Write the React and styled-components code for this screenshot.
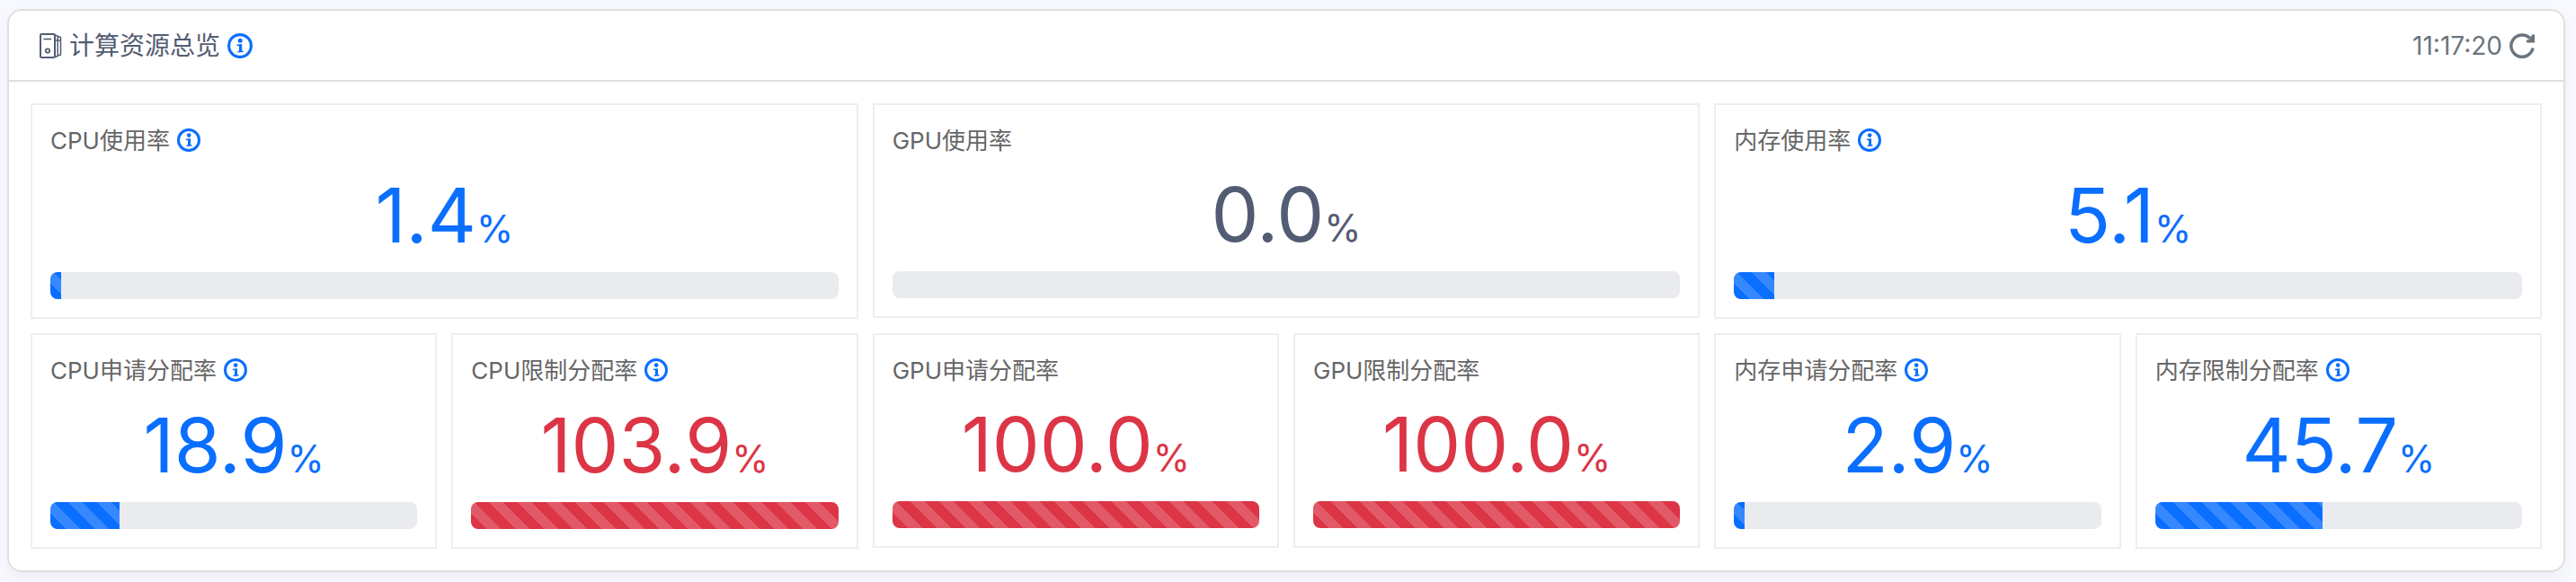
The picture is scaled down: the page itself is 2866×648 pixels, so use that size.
import React, { Component } from 'react';

import styled, { createGlobalStyle } from "styled-components";

const GlobalStyle = createGlobalStyle`
    * {
        box-sizing: border-box;
    }

    body {
        background: #f8f9fe;
        color: #525c72;
        font-family: Inter, "Noto Sans CJK SC", sans-serif;
        margin: 0;
    }
`;

const Page = styled.main`
    padding: 10px 12px 11px 8px;
`;

const Panel = styled.section`
    background: #fff;
    border: 2px solid #dfdfdf;
    border-radius: 16px;
    box-shadow: 0 8px 16px rgba(40, 70, 80, 0.05);
`;

const Header = styled.header`
    align-items: center;
    border-bottom: 2px solid #dfdfdf;
    display: flex;
    height: 79px;
    justify-content: space-between;
    padding: 0 32px 0 34px;
`;

const Title = styled.h1`
    align-items: center;
    display: flex;
    font-size: 28px;
    font-weight: 400;
    gap: 8px;
    line-height: 42px;
    margin: 0;
`;

const Clock = styled.div`
    align-items: center;
    color: #6c757d;
    display: flex;
    font-size: 28px;
    gap: 8px;
    line-height: 42px;
`;

const RefreshButton = styled.button`
    background: none;
    border: 0;
    color: inherit;
    cursor: pointer;
    display: flex;
    padding: 0;
`;

const Grid = styled.div`
    align-items: start;
    display: grid;
    gap: 16px;
    grid-template-columns: repeat(6, minmax(0, 1fr));
    padding: 24px;
`;

const Card = styled.article`
    border: 2px solid #eee;
    grid-column: span ${ props => props.$span };
    padding: 20px;
`;

const Label = styled.h2`
    color: #666;
    display: flex;
    font-size: 26px;
    font-weight: 400;
    gap: 8px;
    line-height: 39px;
    margin: 0;
`;

const Hint = styled.span`
    color: #0a6eff;
    display: flex;
    padding: 6px 0 8px;
`;

const TitleHint = styled.span`
    color: #0a6eff;
    display: flex;
`;

const Value = styled.div`
    color: ${ props => props.$color };
    font-size: 84px;
    line-height: 126px;
    text-align: center;
`;

const Unit = styled.span`
    font-size: 42px;
    line-height: 42px;
`;

const Track = styled.div`
    background: #eaebef;
    border-radius: 8px;
    height: 30px;
    overflow: hidden;
`;

const Fill = styled.div`
    background-color: ${ props => props.$color };
    background-image: linear-gradient(
        45deg,
        rgba(255, 255, 255, 0.18) 25%,
        transparent 25%,
        transparent 50%,
        rgba(255, 255, 255, 0.18) 50%,
        rgba(255, 255, 255, 0.18) 75%,
        transparent 75%,
        transparent
    );
    background-position: 19px 0;
    background-size: 32px 32px;
    height: 100%;
`;

const colors = {
    normal: "#0a6eff",
    danger: "#dc3545",
    idle: "#525c72"
};

const metrics = [
    { label: "CPU使用率", value: 1.4, span: 2, hint: true },
    { label: "GPU使用率", value: 0, span: 2 },
    { label: "内存使用率", value: 5.1, span: 2, hint: true },
    { label: "CPU申请分配率", value: 18.9, span: 1, hint: true },
    { label: "CPU限制分配率", value: 103.9, span: 1, hint: true },
    { label: "GPU申请分配率", value: 100, span: 1 },
    { label: "GPU限制分配率", value: 100, span: 1 },
    { label: "内存申请分配率", value: 2.9, span: 1, hint: true },
    { label: "内存限制分配率", value: 45.7, span: 1, hint: true }
];

const getColor = value => {
    if (value === 0) return colors.idle;

    return value >= 100 ? colors.danger : colors.normal;
};

const InfoIcon = ({ size }) => (
    <svg width={size} height={size} viewBox="0 0 28 28" fill="currentColor" aria-hidden="true">
        <circle cx="14" cy="14" r="12.4" fill="none" stroke="currentColor" strokeWidth="3.2" />
        <circle cx="14.2" cy="8.2" r="2.5" />
        <path d="M10.6 12.6L16.2 12v7.4l1.6.3v1.2L11.4 21.6v-1.5l1.6-.4v-5.5l-2.4-.3z" />
    </svg>
);

const ServerIcon = () => (
    <svg width="25" height="28" viewBox="0 0 25 28" fill="none" stroke="currentColor" aria-hidden="true">
        <rect x="1" y="1" width="16" height="26" rx="1.5" strokeWidth="2" />
        <path d="M4.5 6.5h8.5" strokeWidth="1.6" />
        <circle cx="9" cy="19.5" r="2.2" strokeWidth="1.8" />
        <path d="M17 2l3.2 1v22.5L17 26.5M20.2 3.5l3.3 1v19.5l-3.3 1M17 8h6.5" strokeWidth="1.5" />
    </svg>
);

const RefreshIcon = () => (
    <svg width="28" height="28" viewBox="0 0 28 28" fill="none" stroke="currentColor" strokeWidth="3.5" aria-hidden="true">
        <path d="M26 16.5A12.2 12.2 0 1 1 23 5.8" />
        <path d="M28 1.5v9h-9v-3l3.5-.5 2.5-5.5z" fill="currentColor" stroke="none" />
    </svg>
);

const Metric = ({ label, value, span, hint }) => (
    <Card $span={span}>
        <Label>
            {label}
            {hint && <Hint><InfoIcon size={26} /></Hint>}
        </Label>

        <Value $color={getColor(value)}>
            {value.toFixed(1)}<Unit>%</Unit>
        </Value>

        <Track role="progressbar" aria-label={label} aria-valuenow={value}>
            <Fill $color={getColor(value)} style={{ width: `${ Math.min(value, 100) }%` }} />
        </Track>
    </Card>
);

class App extends Component {
    render() {
        return (
            <Page>
                <GlobalStyle />

                <Panel>
                    <Header>
                        <Title>
                            <ServerIcon />
                            计算资源总览
                            <TitleHint><InfoIcon size={28} /></TitleHint>
                        </Title>

                        <Clock>
                            11:17:20
                            <RefreshButton type="button" aria-label="刷新">
                                <RefreshIcon />
                            </RefreshButton>
                        </Clock>
                    </Header>

                    <Grid>
                        {metrics.map(metric => (
                            <Metric key={metric.label} {...metric} />
                        ))}
                    </Grid>
                </Panel>
            </Page>
        );
    }
}

export default App;
